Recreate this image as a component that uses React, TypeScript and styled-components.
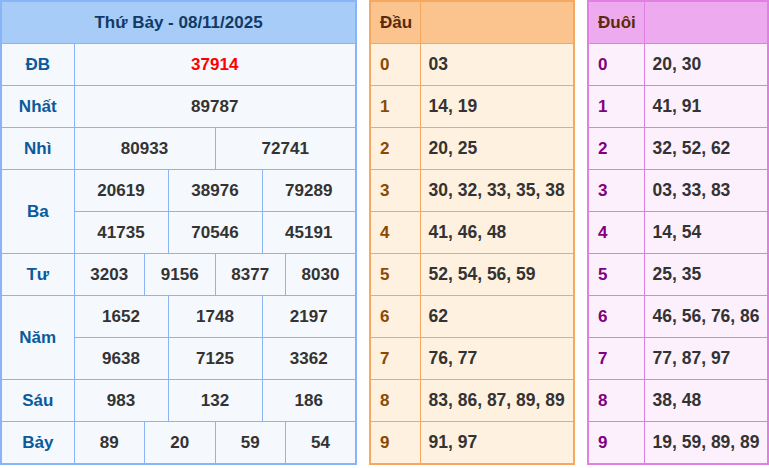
import React from 'react';
import styled, { createGlobalStyle } from 'styled-components';

const Global = createGlobalStyle`
  body { margin: 0; background: #fff; font-family: "Liberation Sans", Arial, sans-serif; }
`;

const Page = styled.div`
  display: flex;
  align-items: flex-start;
  gap: 12px;
  width: 769px;
`;

const Table = styled.table<{ $border: string; $bg: string; $w: number }>`
  width: ${(p) => p.$w}px;
  border-collapse: collapse;
  table-layout: fixed;
  border: 2px solid ${(p) => p.$border};
  background: ${(p) => p.$bg};
  font-size: 17px;
  font-weight: bold;
  color: #333;
  td, th { border: 1px solid ${(p) => p.$border}; height: 41px; padding: 0; }
`;

const Head = styled.th<{ $bg: string; $color: string; $align?: string }>`
  background: ${(p) => p.$bg};
  color: ${(p) => p.$color};
  text-align: ${(p) => p.$align || 'center'};
  padding-left: ${(p) => (p.$align === 'left' ? '9px' : '0')} !important;
  font-size: 17px;
`;

const Label = styled.td`
  color: #0a5a9c;
  text-align: center;
  font-size: 17px;
`;

const Num = styled.td<{ $red?: boolean }>`
  text-align: center;
  color: ${(p) => (p.$red ? '#f00' : '#333')};
`;

const Digit = styled.td<{ $color: string }>`
  color: ${(p) => p.$color};
  padding-left: 9px !important;
`;

const List = styled.td`
  padding-left: 8px !important;
  font-size: 17.5px;
`;

const prizes: { label: string; rows: string[][] }[] = [
  { label: 'ĐB', rows: [['37914']] },
  { label: 'Nhất', rows: [['89787']] },
  { label: 'Nhì', rows: [['80933', '72741']] },
  { label: 'Ba', rows: [['20619', '38976', '79289'], ['41735', '70546', '45191']] },
  { label: 'Tư', rows: [['3203', '9156', '8377', '8030']] },
  { label: 'Năm', rows: [['1652', '1748', '2197'], ['9638', '7125', '3362']] },
  { label: 'Sáu', rows: [['983', '132', '186']] },
  { label: 'Bảy', rows: [['89', '20', '59', '54']] },
];

const dau = ['03', '14, 19', '20, 25', '30, 32, 33, 35, 38', '41, 46, 48', '52, 54, 56, 59', '62', '76, 77', '83, 86, 87, 89, 89', '91, 97'];
const duoi = ['20, 30', '41, 91', '32, 52, 62', '03, 33, 83', '14, 54', '25, 35', '46, 56, 76, 86', '77, 87, 97', '38, 48', '19, 59, 89, 89'];

const Side = ({ title, data, border, bg, head, digit, first, w }: { title: string; data: string[]; border: string; bg: string; head: string; digit: string; first: number; w: number }) => (
  <Table $border={border} $bg={bg} $w={w}>
    <colgroup><col style={{ width: first }} /><col /></colgroup>
    <thead>
      <tr>
        <Head $bg={head} $color="#5a2a0a" $align="left">{title}</Head>
        <Head $bg={head} $color="#5a2a0a" />
      </tr>
    </thead>
    <tbody>
      {data.map((d, i) => (
        <tr key={i}>
          <Digit $color={digit}>{i}</Digit>
          <List>{d}</List>
        </tr>
      ))}
    </tbody>
  </Table>
);

export default function App() {
  return (
    <>
      <Global />
      <Page>
        <Table $border="#8ab4f8" $bg="#f5f8fc" $w={357}>
          <colgroup>
            <col style={{ width: 73 }} />
            {Array.from({ length: 12 }).map((_, i) => <col key={i} />)}
          </colgroup>
          <thead>
            <tr><Head colSpan={13} $bg="#a8ccf8" $color="#123a66">Thứ Bảy - 08/11/2025</Head></tr>
          </thead>
          <tbody>
            {prizes.map((p) =>
              p.rows.map((r, ri) => (
                <tr key={p.label + ri}>
                  {ri === 0 && <Label rowSpan={p.rows.length}>{p.label}</Label>}
                  {r.map((n, ni) => (
                    <Num key={ni} colSpan={12 / r.length} $red={p.label === 'ĐB'}>{n}</Num>
                  ))}
                </tr>
              ))
            )}
          </tbody>
        </Table>
        <Side title="Đầu" data={dau} border="#f5a860" bg="#fff1e0" head="#fbc48e" digit="#8b4a00" first={50} w={206} />
        <Side title="Đuôi" data={duoi} border="#e080e0" bg="#fdf0fd" head="#eeaaee" digit="#800080" first={56} w={182} />
      </Page>
    </>
  );
}
